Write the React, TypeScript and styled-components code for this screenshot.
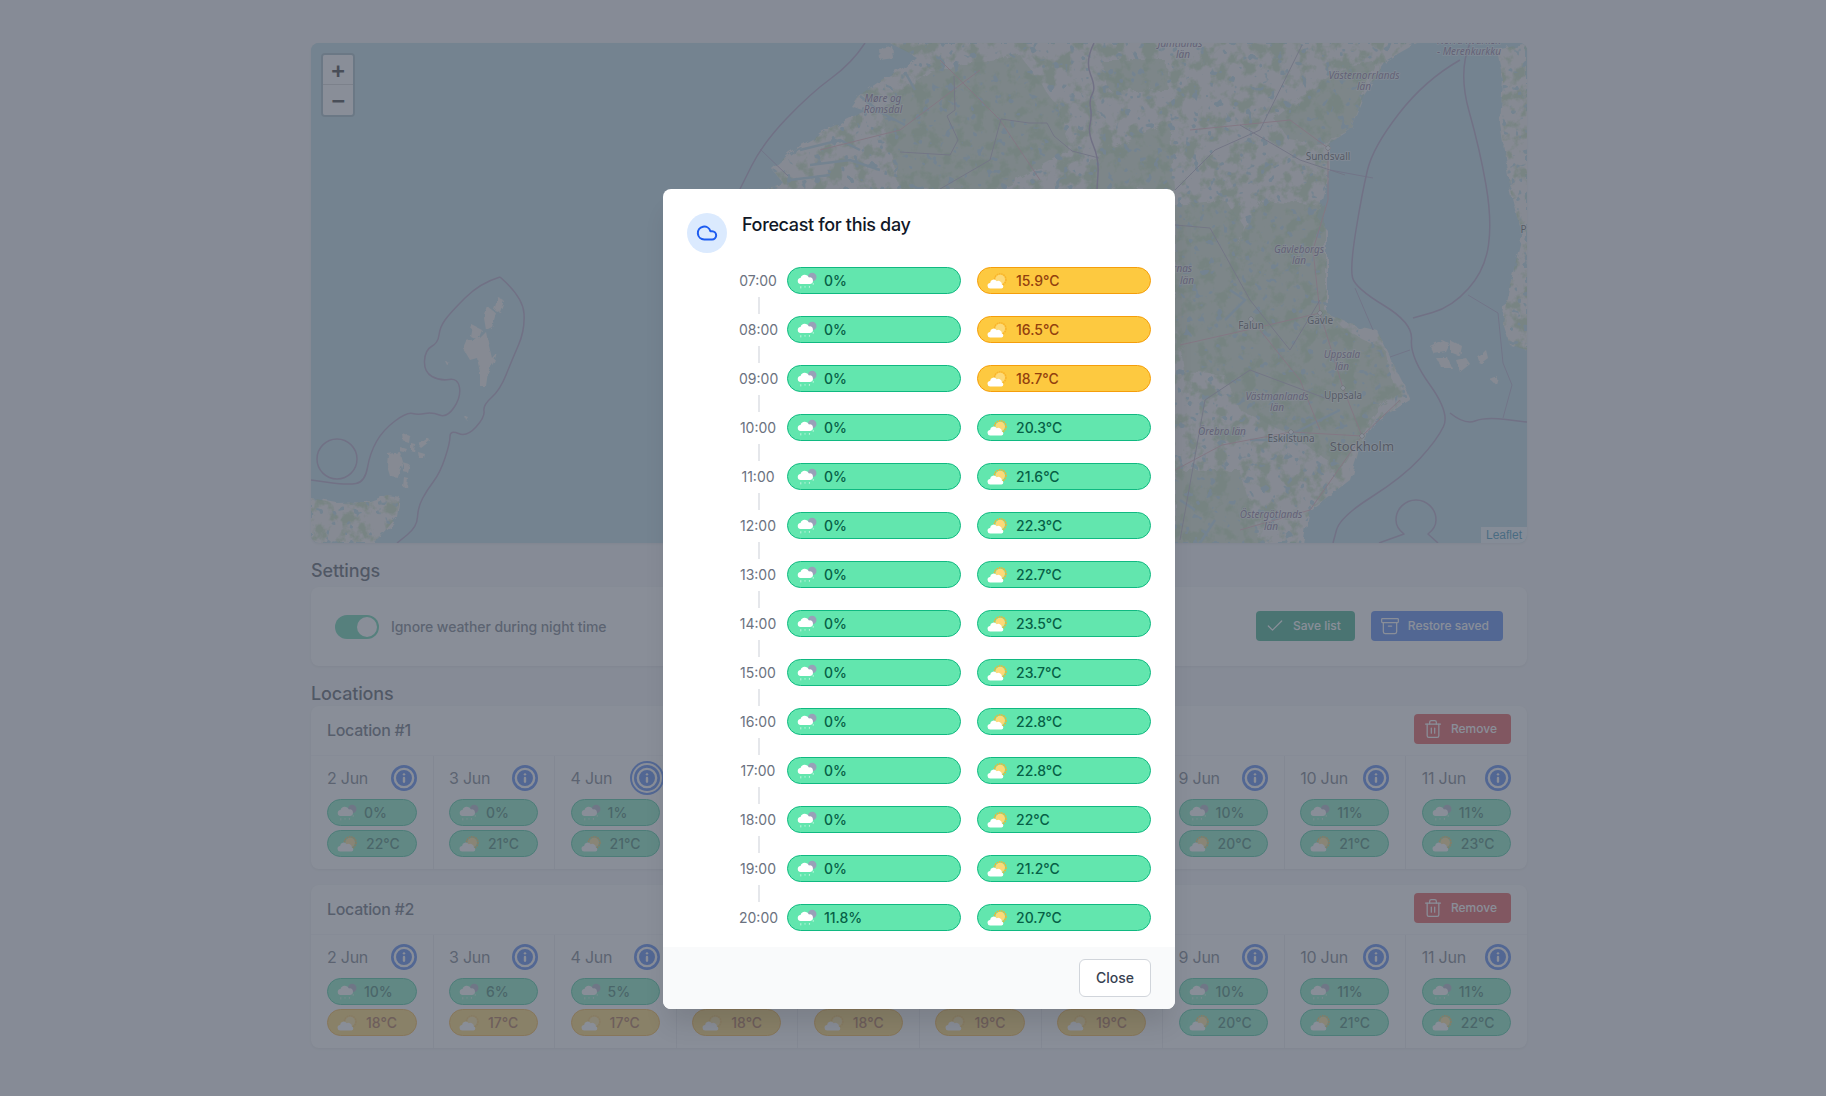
import { type FC } from "react";
import styled, { createGlobalStyle } from "styled-components";
import { Archive, Check, Cloud, Info, Trash2 } from "lucide-react";

const GlobalStyle = createGlobalStyle`
  html, body {
    margin: 0;
    height: 100%;
    overflow: hidden;
    background: #f3f4f6;
  }
  body {
    font-family: Inter, "Liberation Sans", sans-serif;
    color: #1f2937;
  }
  * {
    box-sizing: border-box;
  }
`;

const Page = styled.div`
  position: relative;
  height: 1096px;
  overflow: hidden;
  padding: 43px 0 0 311px;
`;

const Content = styled.main`
  width: 1216px;
`;

const MapFrame = styled.div`
  position: relative;
  height: 500px;
  border-radius: 8px;
  overflow: hidden;
  background: #aad3df;
  box-shadow: 0 1px 3px rgba(0, 0, 0, 0.1);

  & > svg {
    display: block;
  }
`;

const ZoomControl = styled.div`
  position: absolute;
  top: 10px;
  left: 10px;
  width: 34px;
  border: 2px solid rgba(0, 0, 0, 0.2);
  border-radius: 4px;
  background-clip: padding-box;
`;

const ZoomButton = styled.button<{ $last?: boolean }>`
  display: block;
  width: 30px;
  height: 30px;
  padding: 0;
  border: 0;
  border-bottom: ${({ $last }) => ($last ? "0" : "1px solid #ccc")};
  border-radius: ${({ $last }) => ($last ? "0 0 2px 2px" : "2px 2px 0 0")};
  background: #fff;
  color: #000;
  font: bold 22px/32px "DejaVu Sans Mono", "Liberation Mono", monospace;
`;

const Attribution = styled.a`
  position: absolute;
  right: 0;
  bottom: 0;
  height: 16px;
  padding: 0 5px;
  background: rgba(255, 255, 255, 0.8);
  color: #0078a8;
  font: 12px/16px "Liberation Sans", sans-serif;
`;

const SectionTitle = styled.h2<{ $top: number; $height: number }>`
  margin: ${({ $top }) => $top}px 0 0;
  font-size: 18px;
  font-weight: 500;
  line-height: ${({ $height }) => $height}px;
  letter-spacing: -0.15px;
  color: #1f2937;
`;

const SettingsCard = styled.section`
  display: flex;
  align-items: center;
  justify-content: space-between;
  height: 79px;
  margin-top: 2px;
  padding: 0 24px 1px;
  background: #fff;
  border-radius: 8px;
  box-shadow: 0 1px 3px rgba(0, 0, 0, 0.1);
`;

const ToggleLabel = styled.label`
  display: flex;
  align-items: center;
  gap: 12px;
  margin-top: 1px;
  font-size: 14px;
  font-weight: 500;
  letter-spacing: -0.09px;
  color: #4b5563;
`;

const ToggleTrack = styled.span`
  display: flex;
  justify-content: flex-end;
  width: 44px;
  height: 24px;
  padding: 2px;
  border-radius: 12px;
  background: #34c795;
`;

const ToggleKnob = styled.span`
  width: 20px;
  height: 20px;
  border-radius: 50%;
  background: #fff;
`;

const ButtonGroup = styled.div`
  display: flex;
  gap: 16px;
`;

const ActionButton = styled.button<{ $bg: string }>`
  display: inline-flex;
  align-items: center;
  gap: 8px;
  height: 30px;
  padding: 0 14px 0 9px;
  border: 0;
  border-radius: 4px;
  background: ${({ $bg }) => $bg};
  color: #fff;
  font: 500 12px/16px Inter, sans-serif;
`;

const LocationCard = styled.section<{ $top: number }>`
  margin-top: ${({ $top }) => $top}px;
  background: #fff;
  border-radius: 8px;
  box-shadow: 0 1px 3px rgba(0, 0, 0, 0.1);
`;

const LocationHeader = styled.header`
  display: flex;
  align-items: center;
  justify-content: space-between;
  height: 50px;
  padding: 0 16px 3px;
  border-bottom: 1px solid #f3f4f6;
`;

const LocationName = styled.h3`
  margin: 2px 0 0;
  font-size: 16px;
  font-weight: 500;
  letter-spacing: -0.3px;
  color: #374151;
`;

const DayGrid = styled.div`
  display: grid;
  grid-template-columns: repeat(10, 1fr);
`;

const DayColumn = styled.div<{ $first: boolean }>`
  min-width: 0;
  padding: 9px 16px 12px ${({ $first }) => ($first ? "16px" : "15.4px")};
  border-left: ${({ $first }) => ($first ? "0" : "1px solid #e5e7eb")};
`;

const DayHeader = styled.div`
  display: flex;
  align-items: center;
  justify-content: space-between;
  height: 26px;
  margin-bottom: 8px;
  font-size: 16px;
  letter-spacing: -0.25px;
  color: #4b5563;
`;

const InfoButton = styled.button<{ $focused?: boolean }>`
  display: flex;
  align-items: center;
  justify-content: center;
  width: 26px;
  height: 26px;
  padding: 0;
  border: 0;
  border-radius: 50%;
  background: #2563eb;
  color: #fff;
  box-shadow: ${({ $focused }) =>
    $focused ? "0 0 0 2px #fff, 0 0 0 4px #2563eb" : "none"};
`;

const PillStack = styled.div`
  display: flex;
  flex-direction: column;
  gap: 4px;
`;

const PillBox = styled.div<{ $warm: boolean }>`
  display: flex;
  align-items: center;
  height: 27px;
  padding-left: 9px;
  border: 1px solid ${({ $warm }) => ($warm ? "#f59e0b" : "#10b981")};
  border-radius: 14px;
  background: ${({ $warm }) => ($warm ? "#fdc940" : "#62e6ae")};
  color: ${({ $warm }) => ($warm ? "#92400e" : "#065f46")};
  font-size: 14px;
  font-weight: 500;
  white-space: nowrap;

  & > svg {
    flex: none;
  }
`;

const PillText = styled.span<{ $gap: number }>`
  margin-left: ${({ $gap }) => $gap}px;
`;

const Overlay = styled.div`
  position: absolute;
  inset: 0;
  padding: 189px 0 0 663px;
  background: rgba(98, 104, 118, 0.75);
`;

const Modal = styled.div`
  width: 512px;
  height: 820px;
  border-radius: 8px;
  overflow: hidden;
  background: #fff;
  box-shadow: 0 20px 25px -5px rgba(0, 0, 0, 0.1);
`;

const ModalBody = styled.div`
  height: 758px;
  padding: 24px 24px 0;
`;

const ModalHead = styled.div`
  display: flex;
  gap: 15px;
  height: 54px;
`;

const IconCircle = styled.div`
  display: flex;
  align-items: center;
  justify-content: center;
  width: 40px;
  height: 40px;
  border-radius: 50%;
  background: #dbeafe;
  color: #1d5cf0;
`;

const ModalTitle = styled.h3`
  margin: -2px 0 0;
  font-size: 18px;
  font-weight: 500;
  line-height: 28px;
  letter-spacing: -0.35px;
  color: #111827;
`;

const HourList = styled.div`
  padding-left: 52px;
`;

const HourRow = styled.div`
  display: flex;
  align-items: center;
  height: 27px;
`;

const HourLabel = styled.span`
  width: 38px;
  margin-right: 10px;
  font-size: 14px;
  color: #6b7280;
  text-align: center;
  white-space: nowrap;
`;

const HourPills = styled.div`
  display: grid;
  grid-template-columns: 174px 174px;
  gap: 16px;
`;

const Connector = styled.div`
  width: 2px;
  height: 17px;
  margin: 3px 0 2px 19px;
  background: #e5e7eb;
`;

const ModalFooter = styled.footer`
  display: flex;
  justify-content: flex-end;
  height: 62px;
  padding: 12px 24px;
  background: #f9fafb;
`;

const CloseButton = styled.button`
  width: 72px;
  height: 38px;
  border: 1px solid #d1d5db;
  border-radius: 6px;
  background: #fff;
  color: #374151;
  font: 500 14px/20px Inter, sans-serif;
`;

const RainIcon: FC = () => (
  <svg width="20" height="20" viewBox="0 0 20 20">
    <circle cx="15.2" cy="6" r="4.3" fill="#98a1b8" />
    <path
      d="M4 13a3 3 0 0 1-.5-6A4.6 4.6 0 0 1 12 6.4 3.3 3.3 0 0 1 13.2 13z"
      fill="#fff"
    />
    <path
      d="M3.8 15.6v1.4M8 15.6v.6M12.4 15.4v1M16.2 12.4v1"
      stroke="#fff"
      strokeOpacity="0.75"
      strokeWidth="0.8"
      strokeLinecap="round"
    />
  </svg>
);

const SunIcon: FC = () => (
  <svg width="20" height="20" viewBox="0 0 20 20">
    <circle
      cx="13.2"
      cy="8.6"
      r="5.8"
      fill="none"
      stroke="#f8b32c"
      strokeWidth="1.5"
      strokeDasharray="1.6 0.7"
    />
    <circle cx="13.2" cy="8.6" r="4.8" fill="#fdd978" />
    <path
      d="M3.6 17.5a2.8 2.8 0 0 1-.5-5.6 3.6 3.6 0 0 1 6.6-1.7 3.6 3.6 0 0 1 5.2 3.4 2 2 0 0 1-.4 3.9z"
      fill="#fff"
    />
  </svg>
);

const Pill: FC<{ kind: "rain" | "temp"; warm?: boolean; text: string }> = ({
  kind,
  warm = false,
  text,
}) => (
  <PillBox $warm={warm}>
    {kind === "rain" ? <RainIcon /> : <SunIcon />}
    <PillText $gap={kind === "rain" ? 7 : 9}>{text}</PillText>
  </PillBox>
);

const sea = "#aad3df";
const land = "#f2efe9";
const forest = "#add19e";
const maritime = "#a08ab2";
const road = "#e6a5ad";
const county = "#a9a0b4";

// rounds a polyline through the midpoints of its segments
const smooth = (pts: number[][]) => {
  let d = `M${pts[0].join(" ")}`;
  for (let i = 1; i < pts.length - 1; i += 1) {
    const mx = (pts[i][0] + pts[i + 1][0]) / 2;
    const my = (pts[i][1] + pts[i + 1][1]) / 2;
    d += `Q${pts[i].join(" ")} ${mx} ${my}`;
  }
  return `${d}L${pts[pts.length - 1].join(" ")}`;
};

const mainland =
  "M890 43L915 56L901 69L883 79L858 96L851 106L865 111L840 123L819 133L815 139L790 153L772 169L783 183L767 189L740 300L760 543L1303 543L1310 510L1350 480L1360 447L1373 423L1410 400L1403 383L1390 357L1377 330L1350 323L1327 313L1327 230L1317 217L1330 170L1330 143L1350 130L1363 97L1387 60L1417 43Z";
const finland =
  "M1527 43L1497 50L1503 80L1500 123L1510 190L1517 217L1523 232L1507 297L1503 323L1510 345L1527 350Z";
const scotland =
  "M311 498L337 503L367 502L387 495L400 497L397 517L383 533L373 543L311 543Z";

const islands = [
  "M498 297L504 301L500 312L494 310Z",
  "M488 307L496 313L492 327L486 330L484 318Z",
  "M472 325L482 330L478 340L470 336Z",
  "M466 341L480 338L486 332L489 346L492 358L497 352L494 362L488 372L486 386L480 386L480 372L477 358L470 360L463 348Z",
  "M388 454L400 452L403 462L398 477L390 476L387 466Z",
  "M402 433L410 436L409 443L403 441Z",
  "M418 445L428 438L430 441L421 448Z",
  "M411 443L415 444L414 452L411 451Z",
  "M418 452L425 454L424 458L419 458Z",
  "M403 463L410 465L408 473L403 472Z",
  "M404 477L408 478L407 488L403 487Z",
  "M400 447L407 449L405 453L400 452Z",
  "M445 361L449 362L447 365Z",
  "M465 416L468 417L466 420Z",
  "M1430 346L1442 340L1450 344L1446 352L1434 354Z",
  "M1450 340L1462 346L1460 356L1450 352Z",
  "M1436 358L1448 358L1452 368L1442 368Z",
  "M1456 360L1466 358L1470 364L1460 372Z",
  "M1478 358L1486 350L1488 358L1480 364Z",
  "M1490 380L1498 377L1496 384Z",
  "M879 48L892 46L894 58L880 60Z",
];

const forests = [
  "M1300 100L1340 70L1375 60L1350 130L1320 145L1290 140L1275 120Z",
  "M1175 205L1225 200L1245 228L1230 262L1260 200L1325 205L1325 310L1345 330L1385 350L1395 390L1370 420L1340 470L1300 440L1240 410L1225 375L1185 372L1180 335L1175 330Z",
  "M880 110L930 70L1020 55L1060 110L1070 150L1000 189L900 189Z",
  "M1100 60L1165 60L1170 90L1110 90Z",
  "M1090 160L1170 120L1175 189L1090 189Z",
  "M1175 470L1240 470L1260 543L1175 543Z",
];

const regions = [
  { text: "Møre og", x: 883, y: 102 },
  { text: "Romsdal", x: 883, y: 113 },
  { text: "Jämtlands", x: 1180, y: 47 },
  { text: "län", x: 1183, y: 58 },
  { text: "Västernorrlands", x: 1364, y: 79 },
  { text: "län", x: 1364, y: 90 },
  { text: "Gävleborgs", x: 1299, y: 253 },
  { text: "län", x: 1299, y: 264 },
  { text: "Dalarnas", x: 1172, y: 272 },
  { text: "län", x: 1187, y: 284 },
  { text: "Uppsala", x: 1342, y: 358 },
  { text: "län", x: 1342, y: 370 },
  { text: "Västmanlands", x: 1277, y: 400 },
  { text: "län", x: 1277, y: 411 },
  { text: "Örebro län", x: 1222, y: 435 },
  { text: "Östergötlands", x: 1271, y: 518 },
  { text: "län", x: 1271, y: 530 },
  { text: "Norra Kvarken", x: 1469, y: 44 },
  { text: "- Merenkurkku", x: 1469, y: 55 },
];

const cities = [
  { text: "Sundsvall", x: 1328, y: 160, dotY: 148, size: 10 },
  { text: "Gävle", x: 1320, y: 324, dotY: 313, size: 10 },
  { text: "Falun", x: 1251, y: 329, dotY: 319, size: 10 },
  { text: "Uppsala", x: 1343, y: 399, dotY: 388, size: 10 },
  { text: "Eskilstuna", x: 1291, y: 442, dotY: 432, size: 10 },
  { text: "Stockholm", x: 1362, y: 451, dotY: 436, size: 13 },
];

const seaLines = [
  [[1094, 43], [1085, 61], [1096, 88], [1089, 99], [1092, 116], [1088, 133], [1099, 159], [1097, 189]],
  [[865, 43], [852, 63], [811, 93], [763, 143], [740, 189]],
  [[500, 277], [480, 283], [450, 313], [440, 327], [438, 343], [425, 350], [424, 372], [440, 381], [458, 378], [461, 397], [447, 418], [432, 412], [418, 415], [407, 412], [383, 430], [370, 453], [365, 482], [347, 485], [311, 480]],
  [[500, 277], [523, 297], [525, 330], [512, 360], [500, 390], [483, 405], [485, 417], [467, 437], [450, 430], [450, 443], [440, 473], [427, 490], [418, 507], [417, 527], [397, 543]],
  [[1460, 60], [1425, 80], [1373, 147], [1362, 193], [1350, 267], [1355, 288], [1413, 323], [1410, 357], [1450, 413], [1437, 440], [1403, 477], [1340, 517], [1333, 543]],
  [[1470, 43], [1458, 72], [1480, 150], [1492, 220], [1485, 270], [1452, 307], [1413, 318]],
  [[1450, 413], [1465, 425], [1485, 417], [1527, 422]],
];

const MapDrawing: FC = () => (
  <svg width="1216" height="500" viewBox="311 43 1216 500">
    <defs>
      <filter id="rough" x="-5%" y="-5%" width="110%" height="110%">
        <feTurbulence type="fractalNoise" baseFrequency="0.09" numOctaves="3" seed="4" />
        <feDisplacementMap in="SourceGraphic" scale="8" />
      </filter>
      <filter id="roughSmall" x="-5%" y="-5%" width="110%" height="110%">
        <feTurbulence type="fractalNoise" baseFrequency="0.2" numOctaves="2" seed="7" />
        <feDisplacementMap in="SourceGraphic" scale="4" />
      </filter>
      <filter id="mottle" x="0" y="0" width="100%" height="100%" colorInterpolationFilters="sRGB">
        <feTurbulence type="fractalNoise" baseFrequency="0.07" numOctaves="4" seed="9" />
        <feColorMatrix values="0 0 0 0 0.68  0 0 0 0 0.82  0 0 0 0 0.62  6 0 0 0 -2.9" />
      </filter>
      <filter id="lakes" x="0" y="0" width="100%" height="100%" colorInterpolationFilters="sRGB">
        <feTurbulence type="fractalNoise" baseFrequency="0.13" numOctaves="2" seed="3" />
        <feColorMatrix values="0 0 0 0 0.67  0 0 0 0 0.83  0 0 0 0 0.87  16 0 0 0 -10.4" />
      </filter>
      <clipPath id="landClip">
        <path d={mainland} />
        <path d={finland} />
        <path d={scotland} />
      </clipPath>
    </defs>
    <rect x="311" y="43" width="1216" height="500" fill={sea} />
    <g filter="url(#rough)" fill={land}>
      <path d={mainland} />
      <path d={finland} />
      <path d={scotland} />
    </g>
    <g filter="url(#roughSmall)" fill={land}>
      {islands.map((d) => (
        <path d={d} key={d} />
      ))}
    </g>
    <g filter="url(#rough)" fill={forest} opacity="0.5">
      {forests.map((d) => (
        <path d={d} key={d} />
      ))}
    </g>
    <g clipPath="url(#landClip)">
      <rect x="311" y="43" width="1216" height="500" filter="url(#mottle)" opacity="0.8" />
      <rect x="311" y="43" width="1216" height="500" filter="url(#lakes)" />
    </g>
    <g fill="none" stroke={sea} strokeWidth="2.5">
      <path d="M800 150L840 140L860 150M810 165L850 160L880 170M790 180L830 175M860 96L880 112L905 125M905 72L915 90" />
      <path d="M1230 290L1245 300L1225 320M1340 410L1310 425L1280 440L1250 440" />
      <path d="M1215 520L1200 543M1180 500L1195 510" />
    </g>
    <g fill="none" stroke={road} strokeWidth="1">
      <path d="M1328 148L1328 200L1313 250L1320 313L1343 388L1362 436M1251 319L1300 380L1320 430M1320 313L1251 329L1180 345M1328 148L1290 120L1190 130" />
      <path d="M1362 436L1291 432L1222 445L1175 470M1362 436L1310 510L1240 530M1362 436L1400 400M940 60L1000 120L1040 180M820 150L900 130L980 70" />
    </g>
    <g fill="none" stroke={county} strokeWidth="1">
      <path d="M1001 119L1029 123L1047 123L1054 136L1072 151L1099 158M1001 119L990 160L940 189M954 76L955 110L947 116L958 140L950 155L900 152M1175 225L1210 228L1250 300L1290 350L1320 300M1302 45L1260 130L1215 150L1175 190M1345 175L1300 160L1240 125M1330 400L1250 370L1205 400L1180 540" />
    </g>
    <g fill="none" stroke={maritime} strokeWidth="1.5" strokeLinejoin="round">
      {seaLines.map((pts) => (
        <path d={smooth(pts)} key={pts.join()} />
      ))}
      <circle cx="337" cy="459" r="20" />
      <path d="M1416 500a20 20 0 0 1 20 20q0 8-8 14l10 9M1416 500a20 20 0 0 0-20 20q0 8 8 14l-25 9" />
    </g>
    <g fill="none" stroke={maritime} strokeWidth="0.8">
      <path d="M760 149L788 176M1468 295L1498 313L1503 363L1512 385L1503 418M1373 330L1355 288M1390 357L1410 350M1330 170L1373 178" />
    </g>
    <g
      fill="#6a4f78"
      fontFamily="'Noto Sans', sans-serif"
      fontSize="10"
      fontStyle="italic"
      stroke="#fff"
      strokeOpacity="0.6"
      strokeWidth="1.5"
      paintOrder="stroke"
      textAnchor="middle"
    >
      {regions.map(({ text, x, y }) => (
        <text key={`${text}${y}`} x={x} y={y}>
          {text}
        </text>
      ))}
    </g>
    <g
      fill="#333"
      fontFamily="'Noto Sans', sans-serif"
      stroke="#fff"
      strokeOpacity="0.7"
      strokeWidth="1.5"
      paintOrder="stroke"
      textAnchor="middle"
    >
      {cities.map(({ text, x, y, dotY, size }) => (
        <g key={text}>
          <circle cx={x} cy={dotY} r="2" fill="#fff" stroke="#333" strokeWidth="0.8" />
          <text x={x} y={y} fontSize={size}>
            {text}
          </text>
        </g>
      ))}
      <text x="1530" y="233" fontSize="10">
        Pori
      </text>
    </g>
  </svg>
);

interface LocationData {
  name: string;
  rain: number[];
  temps: number[];
  focusedDay?: number;
}

const days = [2, 3, 4, 5, 6, 7, 8, 9, 10, 11];

const locations: LocationData[] = [
  {
    name: "Location #1",
    rain: [0, 0, 1, 3, 5, 8, 9, 10, 11, 11],
    temps: [22, 21, 21, 20, 20, 20, 21, 20, 21, 23],
    focusedDay: 4,
  },
  {
    name: "Location #2",
    rain: [10, 6, 5, 6, 8, 9, 10, 10, 11, 11],
    temps: [18, 17, 17, 18, 18, 19, 19, 20, 21, 22],
  },
];

const hours = [
  { time: "07:00", rain: "0%", temp: "15.9°C", warm: true },
  { time: "08:00", rain: "0%", temp: "16.5°C", warm: true },
  { time: "09:00", rain: "0%", temp: "18.7°C", warm: true },
  { time: "10:00", rain: "0%", temp: "20.3°C" },
  { time: "11:00", rain: "0%", temp: "21.6°C" },
  { time: "12:00", rain: "0%", temp: "22.3°C" },
  { time: "13:00", rain: "0%", temp: "22.7°C" },
  { time: "14:00", rain: "0%", temp: "23.5°C" },
  { time: "15:00", rain: "0%", temp: "23.7°C" },
  { time: "16:00", rain: "0%", temp: "22.8°C" },
  { time: "17:00", rain: "0%", temp: "22.8°C" },
  { time: "18:00", rain: "0%", temp: "22°C" },
  { time: "19:00", rain: "0%", temp: "21.2°C" },
  { time: "20:00", rain: "11.8%", temp: "20.7°C" },
];

const Location: FC<{ data: LocationData; top: number }> = ({ data, top }) => (
  <LocationCard $top={top}>
    <LocationHeader>
      <LocationName>{data.name}</LocationName>
      <ActionButton $bg="#e02424">
        <Trash2 size={20} strokeWidth={1.5} />
        Remove
      </ActionButton>
    </LocationHeader>
    <DayGrid>
      {days.map((day, index) => (
        <DayColumn $first={index === 0} key={day}>
          <DayHeader>
            {day} Jun
            <InfoButton $focused={data.focusedDay === day}>
              <Info size={22} strokeWidth={2.6} />
            </InfoButton>
          </DayHeader>
          <PillStack>
            <Pill kind="rain" text={`${data.rain[index]}%`} />
            <Pill
              kind="temp"
              text={`${data.temps[index]}°C`}
              warm={data.temps[index] < 20}
            />
          </PillStack>
        </DayColumn>
      ))}
    </DayGrid>
  </LocationCard>
);

const ForecastModal: FC = () => (
  <Overlay>
    <Modal role="dialog">
      <ModalBody>
        <ModalHead>
          <IconCircle>
            <Cloud size={22} strokeWidth={2.2} />
          </IconCircle>
          <ModalTitle>Forecast for this day</ModalTitle>
        </ModalHead>
        <HourList>
          {hours.map(({ time, rain, temp, warm }, index) => (
            <div key={time}>
              <HourRow>
                <HourLabel>{time}</HourLabel>
                <HourPills>
                  <Pill kind="rain" text={rain} />
                  <Pill kind="temp" text={temp} warm={warm} />
                </HourPills>
              </HourRow>
              {index < hours.length - 1 ? <Connector /> : null}
            </div>
          ))}
        </HourList>
      </ModalBody>
      <ModalFooter>
        <CloseButton>Close</CloseButton>
      </ModalFooter>
    </Modal>
  </Overlay>
);

export default function App() {
  return (
    <Page>
      <GlobalStyle />
      <Content>
        <MapFrame>
          <MapDrawing />
          <ZoomControl>
            <ZoomButton>+</ZoomButton>
            <ZoomButton $last>−</ZoomButton>
          </ZoomControl>
          <Attribution>Leaflet</Attribution>
        </MapFrame>
        <SectionTitle $top={14} $height={28}>
          Settings
        </SectionTitle>
        <SettingsCard>
          <ToggleLabel>
            <ToggleTrack>
              <ToggleKnob />
            </ToggleTrack>
            Ignore weather during night time
          </ToggleLabel>
          <ButtonGroup>
            <ActionButton $bg="#059669">
              <Check size={20} strokeWidth={1.5} />
              Save list
            </ActionButton>
            <ActionButton $bg="#2563eb">
              <Archive size={20} strokeWidth={1.5} />
              Restore saved
            </ActionButton>
          </ButtonGroup>
        </SettingsCard>
        <SectionTitle $top={14} $height={27}>
          Locations
        </SectionTitle>
        <Location data={locations[0]} top={-1} />
        <Location data={locations[1]} top={16} />
      </Content>
      <ForecastModal />
    </Page>
  );
}
